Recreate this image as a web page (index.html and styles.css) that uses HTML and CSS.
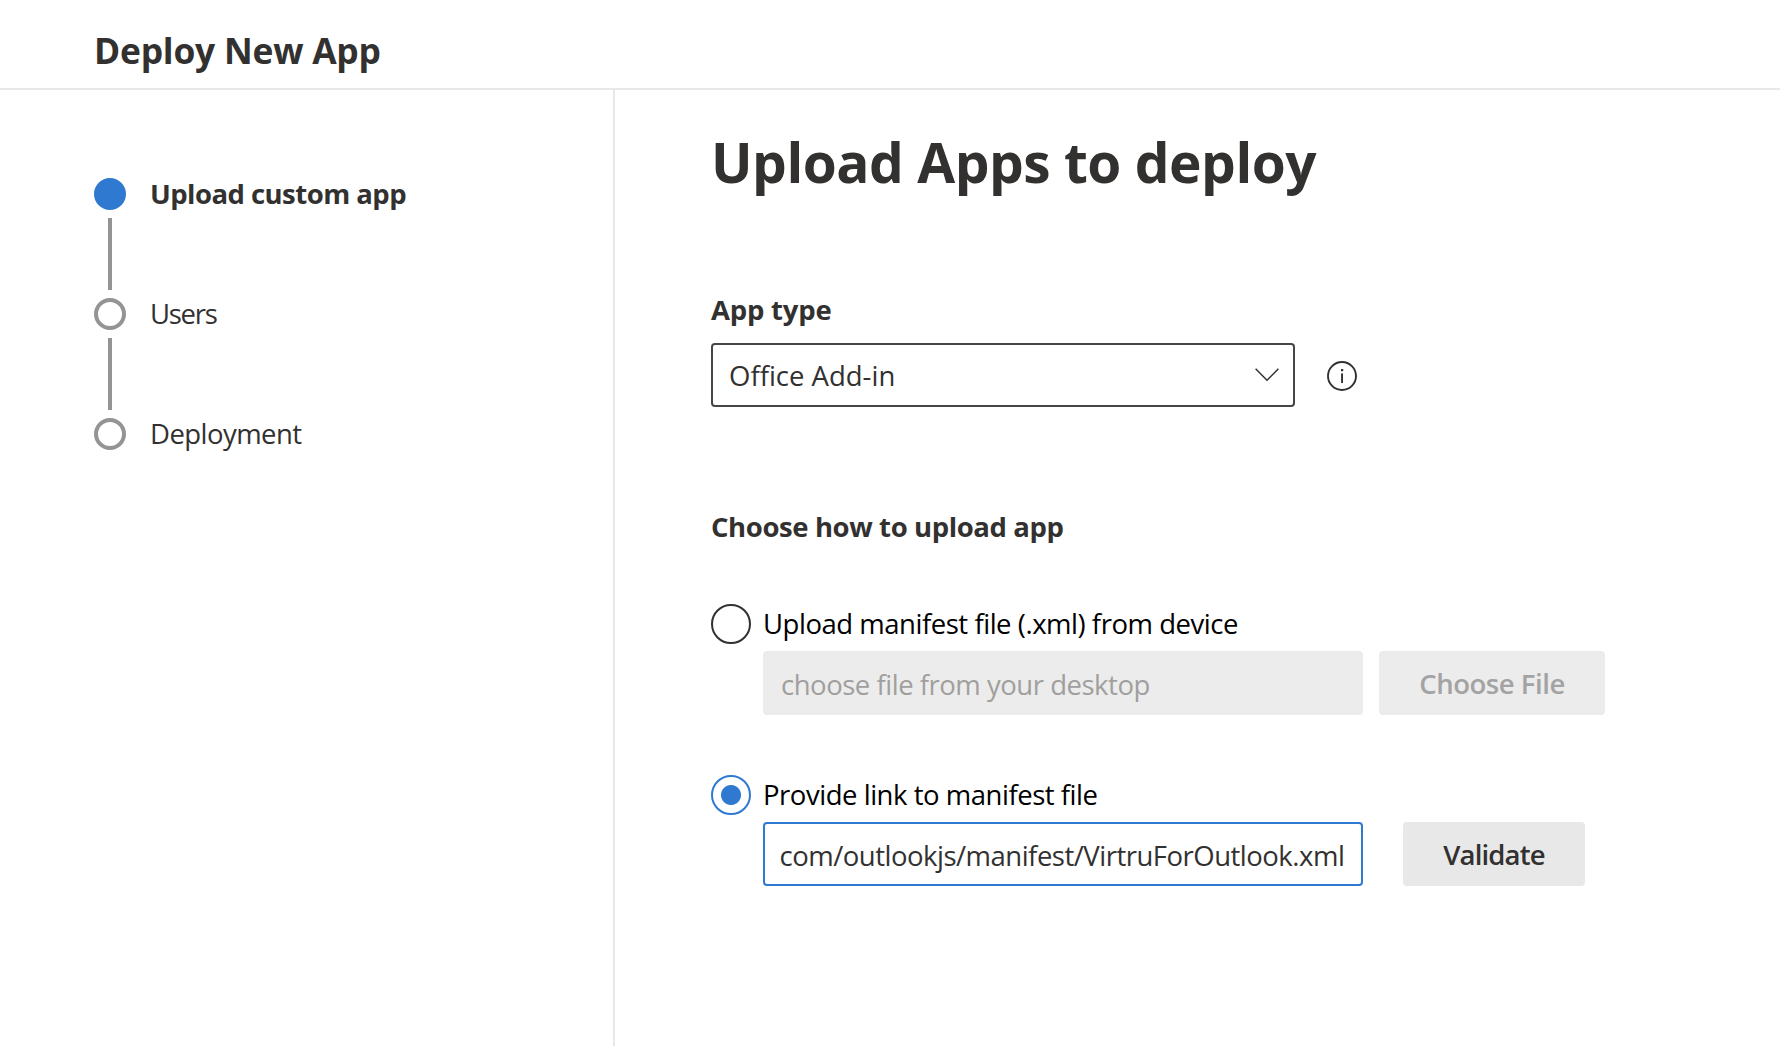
FILE: index.html
```
<!DOCTYPE html>
<html lang="en">
<head>
  <meta charset="UTF-8">
  <meta name="viewport" content="width=device-width, initial-scale=1.0">
  <title>Deploy New App</title>
  <link rel="stylesheet" href="styles.css">
</head>
<body>
  <header class="header">
    <h1 class="header-title">Deploy New App</h1>
  </header>

  <div class="layout">
    <nav class="steps">
      <div class="step active">
        <span class="step-dot"></span>
        <span class="step-label">Upload custom app</span>
      </div>
      <div class="step-line"></div>
      <div class="step">
        <span class="step-dot"></span>
        <span class="step-label users">Users</span>
      </div>
      <div class="step-line"></div>
      <div class="step">
        <span class="step-dot"></span>
        <span class="step-label">Deployment</span>
      </div>
    </nav>

    <main class="content">
      <h2 class="page-title">Upload Apps to deploy</h2>

      <div class="label app-type">App type</div>
      <div class="select-row">
        <div class="select" role="combobox" tabindex="0">
          <span>Office Add-in</span>
          <svg class="chevron" width="26" height="16" viewBox="0 0 26 16">
            <path d="M1.6 1.8 L13 13.2 L24.4 1.8" fill="none" stroke="#323130" stroke-width="1.5"/>
          </svg>
        </div>
        <svg class="info" width="30" height="30" viewBox="0 0 30 30">
          <circle cx="15" cy="15" r="14" fill="none" stroke="#323130" stroke-width="1.9"/>
          <rect x="14" y="8" width="2.2" height="2.2" fill="#323130"/>
          <rect x="14.1" y="12.4" width="1.9" height="9.6" fill="#323130"/>
        </svg>
      </div>

      <div class="label upload-label">Choose how to upload app</div>

      <label class="radio">
        <span class="radio-circle"></span>
        <span class="radio-text">Upload manifest file (.xml) from device</span>
      </label>
      <div class="field-row">
        <input type="text" class="input" placeholder="choose file from your desktop" disabled>
        <button class="button choose" disabled>Choose File</button>
      </div>

      <label class="radio link">
        <span class="radio-circle checked"></span>
        <span class="radio-text">Provide link to manifest file</span>
      </label>
      <div class="field-row">
        <input type="text" class="input focused" value="com/outlookjs/manifest/VirtruForOutlook.xml" spellcheck="false">
        <button class="button validate">Validate</button>
      </div>
    </main>
  </div>
</body>
</html>
```
FILE: styles.css
```
* {
  box-sizing: border-box;
}
body {
  margin: 0;
  height: 100vh;
  display: flex;
  flex-direction: column;
  background: #fff;
  color: #323130;
  font-family: 'Segoe UI', 'Open Sans', sans-serif;
  font-size: 27.5px;
  letter-spacing: -0.47px;
  overflow: hidden;
}
.header {
  height: 90px;
  padding: 26px 94px 0;
  border-bottom: 2px solid #e8e8e8;
}
.header-title {
  margin: 0;
  font-size: 35.4px;
  line-height: 48px;
  font-weight: 700;
  letter-spacing: -0.23px;
}
.layout {
  flex: 1;
  display: flex;
}

/* steps */
.steps {
  width: 615px;
  padding: 88px 0 0 94px;
  border-right: 2px solid #e8e8e8;
}
.step {
  display: flex;
  height: 32px;
  gap: 24px;
}
.step-dot {
  width: 32px;
  height: 32px;
  border: 4px solid #949494;
  border-radius: 50%;
}
.step-label {
  line-height: 32px;
  letter-spacing: -0.55px;
}
.step-label.users {
  letter-spacing: -1.3px;
}
.step.active .step-dot {
  background: #3079d0;
  border-color: #3079d0;
}
.step.active .step-label {
  font-weight: 700;
  letter-spacing: -0.54px;
}
.step-line {
  width: 4px;
  height: 72px;
  margin: 8px 0 8px 14px;
  background: #949494;
}

/* form */
.content {
  flex: 1;
  padding: 36px 0 0 96px;
}
.page-title {
  margin: 0;
  font-size: 55px;
  line-height: 72px;
  font-weight: 700;
  letter-spacing: -0.48px;
}
.label {
  line-height: 38px;
  font-weight: 700;
  letter-spacing: -0.4px;
}
.app-type {
  margin-top: 93px;
  letter-spacing: -0.2px;
}
.select-row {
  display: flex;
  align-items: center;
  gap: 32px;
  margin-top: 14px;
}
.select {
  width: 584px;
  height: 64px;
  display: flex;
  align-items: center;
  justify-content: space-between;
  padding: 0 13px 0 16px;
  border: 2px solid #484644;
  border-radius: 4px;
  letter-spacing: 0;
}
.info {
  margin-top: 2px;
}
.upload-label {
  margin-top: 101px;
}
.radio {
  display: flex;
  gap: 12px;
  margin-top: 58px;
  height: 40px;
  color: #000;
}
.radio.link {
  margin-top: 60px;
}
.radio-circle {
  width: 40px;
  height: 40px;
  border: 2px solid #323130;
  border-radius: 50%;
}
.radio-circle.checked {
  border-color: #3079d0;
  background: radial-gradient(circle, #3079d0 9.5px, #fff 10.5px);
}
.radio-text {
  line-height: 39px;
}
.field-row {
  display: flex;
  margin: 7px 0 0 52px;
}
.input {
  width: 600px;
  height: 64px;
  padding: 2px 14px 0 16px;
  border: 2px solid #ececec;
  border-radius: 4px;
  background: #ececec;
  color: #323130;
  font: inherit;
  letter-spacing: -0.48px;
  outline: none;
}
.input::placeholder {
  color: #a19f9d;
  opacity: 1;
}
.input.focused {
  padding-left: 14.5px;
  background: #fff;
  border-color: #3079d0;
  letter-spacing: -0.5px;
}
.button {
  height: 64px;
  padding: 0;
  border: none;
  border-radius: 4px;
  background: #e8e8e8;
  color: #323130;
  font: inherit;
  font-weight: 600;
}
.button.choose {
  width: 226px;
  margin-left: 16px;
  background: #ececec;
  color: #a3a3a3;
  letter-spacing: -0.46px;
}
.button.validate {
  width: 182px;
  margin-left: 40px;
  letter-spacing: -0.87px;
}
```
